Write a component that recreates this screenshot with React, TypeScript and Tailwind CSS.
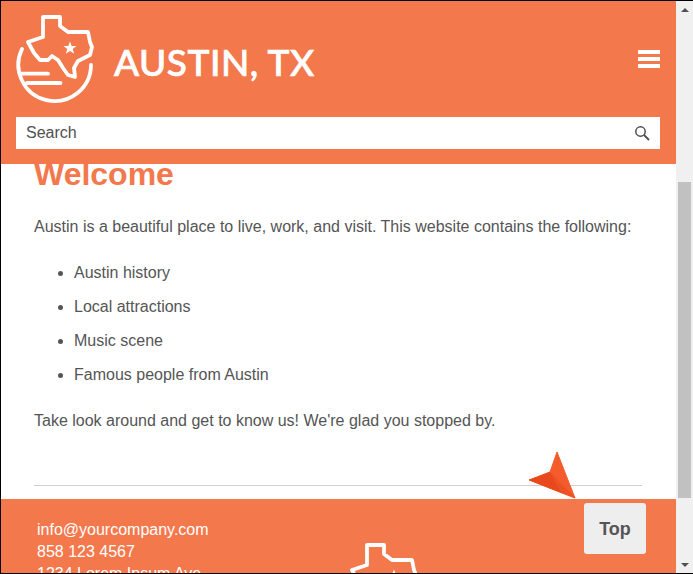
const ORANGE = "bg-[#f3784c]";

function Logo({ className }: { className?: string }) {
  return (
    <svg viewBox="15 14 80 90" className={className} fill="none" stroke="#fff" strokeWidth="3.8" strokeLinecap="round" strokeLinejoin="round">
      <path d="M43 17 L60 17 L60 26 L68 32 L88 32 L90 42 L92 47 L90 55 L78 61 L74 68 L75 77 L68 75 L63 68 L58 60 L52 56 L48 60 L40 60 L34 53 L28 42 L43 37 Z" />
      <path d="M70 41.5 L71.7 46 L76.5 46 L72.7 49 L74.2 53.8 L70 51 L65.8 53.8 L67.3 49 L63.5 46 L68.3 46 Z" fill="#fff" stroke="none" />
      <path d="M22 49 A36.3 36.3 0 1 0 91 65" />
      <path d="M21 73.7 L48 73.7" />
      <path d="M27 83 L60.5 83" />
    </svg>
  );
}

function Header() {
  return (
    <header className={`relative z-10 ${ORANGE} h-[163px] shrink-0 pl-[15px] pr-[16px]`}>
      <div className="flex items-center justify-between h-[116px]">
        <div className="flex items-center gap-[19px] ml-[-1px]">
          <Logo className="w-[80px] h-[90px]" />
          <span className="text-white text-[37px] leading-none tracking-[0.5px] font-['Lato',sans-serif] font-medium mt-[4px] [-webkit-text-stroke:0.7px_white]">AUSTIN, TX</span>
        </div>
        <div className="flex flex-col gap-[3px] w-[22px] mt-[-1px]">
          <span className="h-[4px] bg-white" />
          <span className="h-[4px] bg-white" />
          <span className="h-[4px] bg-white" />
        </div>
      </div>
      <div className="bg-white h-[32px] flex items-center justify-between pl-[10px] pr-[10px]">
        <span className="text-[16px] text-[#505050]">Search</span>
        <svg viewBox="0 0 16 16" className="w-[16px] h-[16px]" fill="none" stroke="#4d4d4d" strokeWidth="1.5">
          <circle cx="6.5" cy="6.5" r="4.7" />
          <path d="M10 10 L15 15" strokeWidth="1.8" />
        </svg>
      </div>
    </header>
  );
}

function Scrollbar() {
  return (
    <div className="w-[17px] shrink-0 bg-[#f0f0f0] flex flex-col items-center">
      <div className="h-[17px] flex items-center justify-center shrink-0 pt-[1px]">
        <span className="w-0 h-0 border-x-[4px] border-x-transparent border-b-[4px] border-b-[#505050]" />
      </div>
      <div className="mt-[164px] w-[13px] h-[316px] bg-[#c1c1c1]" />
      <div className="mt-auto h-[17px] flex items-center justify-center shrink-0">
        <span className="w-0 h-0 border-x-[4px] border-x-transparent border-t-[4px] border-t-[#505050]" />
      </div>
    </div>
  );
}

function Content() {
  const items = ["Austin history", "Local attractions", "Music scene", "Famous people from Austin"];
  return (
    <main className="bg-white h-[335px] shrink-0 pl-[33px] pr-[34px] text-[16px] leading-[24px] text-[#555555] overflow-hidden">
      <h1 className="text-[32px] leading-[36px] font-bold text-[#f3784c] mt-[-8px]">Welcome</h1>
      <p className="mt-[23px] whitespace-nowrap">Austin is a beautiful place to live, work, and visit. This website contains the following:</p>
      <ul className="mt-[22px] pl-[40px] list-disc flex flex-col gap-[10px]">
        {items.map((t) => <li key={t}>{t}</li>)}
      </ul>
      <p className="mt-[22px]">Take look around and get to know us! We're glad you stopped by.</p>
      <div className="mt-[52px] border-t border-[#d0d0d0]" />
    </main>
  );
}

function Footer() {
  return (
    <footer className={`relative flex-1 min-h-0 ${ORANGE} overflow-hidden pl-[36px] pt-[20px] text-white text-[16px] leading-[22px]`}>
      <p>info@yourcompany.com</p>
      <p>858 123 4567</p>
      <p>1234 Lorem Ipsum Ave.</p>
      <Logo className="absolute left-[338px] top-[43px] w-[80px] h-[90px]" />
      <button className="absolute right-[30px] top-[4px] w-[62px] h-[51px] rounded-[3px] bg-[#eeeeee] text-[#555555] font-bold text-[18px]">Top</button>
    </footer>
  );
}

export default function App() {
  return (
    <div className="w-[693px] h-[574px] overflow-hidden border border-black border-r-0 flex font-['Liberation_Sans',Arial,sans-serif] relative">
      <div className="flex-1 min-w-0 flex flex-col">
        <Header />
        <Content />
        <Footer />
      </div>
      <Scrollbar />
      <svg viewBox="0 0 56 54" className="absolute left-[524px] top-[447px] w-[56px] h-[54px]" strokeLinejoin="round" strokeWidth="1">
        <path d="M32 4 L25 24 L50 50 Z" fill="#f55c2b" stroke="#f55c2b" />
        <path d="M4 32 L25 24 L37 45 Z" fill="#e8481c" stroke="#e8481c" />
        <path d="M25 24 L50 50 L37 45 Z" fill="#ee5122" stroke="#ee5122" />
      </svg>
    </div>
  );
}
